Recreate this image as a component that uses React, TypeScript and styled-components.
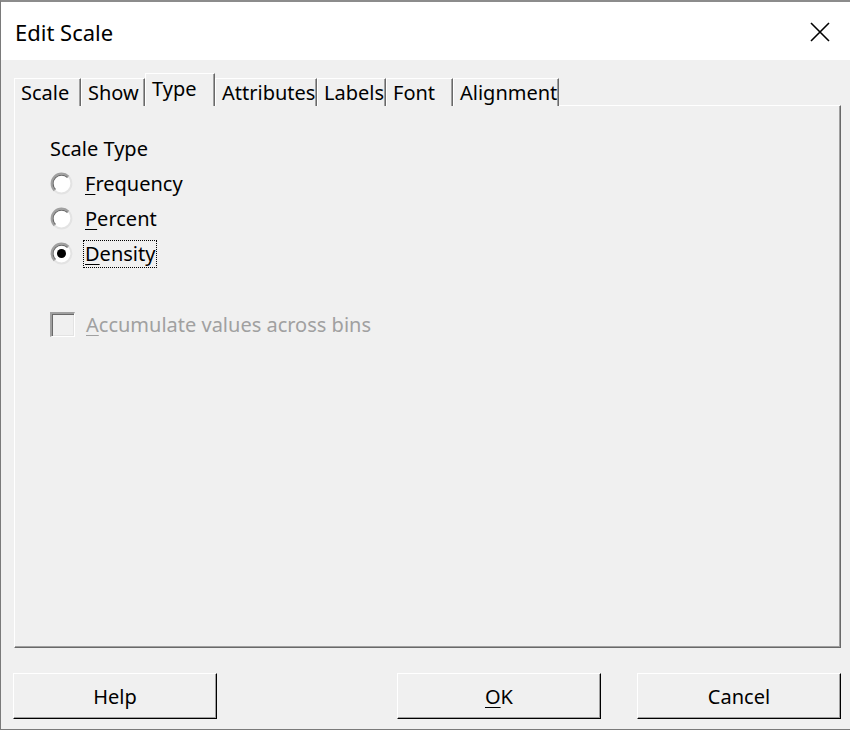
import React from "react";
import styled, { createGlobalStyle, css } from "styled-components";

const Global = createGlobalStyle`
  html, body { margin: 0; padding: 0; background: #f0f0f0; }
  body { font-family: "Noto Sans", "Open Sans", sans-serif; }
  * { box-sizing: border-box; }
`;

const Window = styled.div`
  width: 850px;
  height: 730px;
  background: #f0f0f0;
  border-top: 2px solid #8c8c8c;
  border-left: 1px solid #7a7a7a;
  border-bottom: 1px solid #7a7a7a;
  display: flex;
  flex-direction: column;
  color: #000;
  font-size: 20px;
  overflow: hidden;
`;

const TitleBar = styled.div`
  height: 58px;
  background: #fff;
  display: flex;
  align-items: center;
  justify-content: space-between;
  padding: 2px 18px 0 14px;
  font-size: 22px;
`;

const CloseButton = styled.div`
  width: 24px;
  height: 24px;
  display: flex;
  align-items: center;
  justify-content: center;
`;

const Body = styled.div`
  flex: 1;
  display: flex;
  flex-direction: column;
  padding: 13px 9px 0 12px;
`;

const TabStrip = styled.div`
  display: flex;
  align-items: flex-end;
  height: 33px;
  margin-left: 1px;
  position: relative;
  z-index: 1;
  margin-bottom: -1px;
`;

const Tab = styled.div<{ $w: number; $active?: boolean }>`
  width: ${(p) => p.$w}px;
  height: 28px;
  padding-left: 6px;
  display: flex;
  align-items: center;
  white-space: nowrap;
  background: #f0f0f0;
  border-top: 1px solid #fff;
  border-left: 1px solid #fff;
  border-right: 1px solid #696969;
  box-shadow: inset -1px 0 0 #a0a0a0;
  line-height: 1;
  ${(p) =>
    p.$active &&
    css`
      height: 33px;
      padding-bottom: 3px;
      border-bottom: none;
    `}
`;

const Panel = styled.div`
  height: 543px;
  margin-left: 1px;
  border-top: 1px solid #fff;
  border-left: 1px solid #fff;
  border-right: 1px solid #696969;
  border-bottom: 1px solid #696969;
  box-shadow: inset -1px -1px 0 #a0a0a0;
  padding: 28px 0 0 35px;
  display: flex;
  flex-direction: column;
`;

const GroupLabel = styled.div`
  height: 32px;
  line-height: 30px;
`;

const OptionRow = styled.div<{ $gap?: number }>`
  height: 35px;
  display: flex;
  align-items: center;
  gap: ${(p) => p.$gap ?? 10}px;
`;

const OptionText = styled.span<{ $focused?: boolean; $disabled?: boolean }>`
  line-height: 26px;
  padding: 0 1px;
  border: 1px dotted ${(p) => (p.$focused ? "#000" : "transparent")};
  color: ${(p) => (p.$disabled ? "#a0a0a0" : "#000")};
`;

const Mnemonic = styled.span`
  text-decoration: underline;
  text-underline-offset: 3px;
  text-decoration-thickness: 1px;
`;

const CheckRow = styled(OptionRow)`
  margin-top: 36px;
`;

const CheckBox = styled.div`
  width: 25px;
  height: 25px;
  border-top: 2px solid #a0a0a0;
  border-left: 2px solid #a0a0a0;
  border-right: 1px solid #fff;
  border-bottom: 1px solid #fff;
  box-shadow: inset 1px 1px 0 #696969, inset -1px -1px 0 #e3e3e3;
  background: #f0f0f0;
`;

const Footer = styled.div`
  display: flex;
  align-items: center;
  padding-top: 25px;
`;

const Button = styled.div<{ $gapLeft?: number }>`
  width: 204px;
  height: 46px;
  margin-left: ${(p) => p.$gapLeft ?? 0}px;
  display: flex;
  align-items: center;
  justify-content: center;
  background: #f0f0f0;
  border-top: 1px solid #fff;
  border-left: 1px solid #fff;
  border-right: 1px solid #000;
  border-bottom: 1px solid #000;
  box-shadow: inset -1px -1px 0 #a0a0a0;
`;

const Spacer = styled.div`
  flex: 1;
`;

const Radio: React.FC<{ checked?: boolean }> = ({ checked }) => (
  <svg width="23" height="23" viewBox="0 0 23 23">
    <circle cx="11.5" cy="11.5" r="10" fill="#fff" />
    <path d="M18.57 4.43 A10 10 0 0 1 4.43 18.57" fill="none" stroke="#e3e3e3" strokeWidth="2" />
    <path d="M4.43 18.57 A10 10 0 0 1 18.57 4.43" fill="none" stroke="#a0a0a0" strokeWidth="2" />
    <path d="M5.49 17.51 A8.5 8.5 0 0 1 17.51 5.49" fill="none" stroke="#696969" strokeWidth="1.2" />
    {checked && <circle cx="11.5" cy="11.5" r="4.5" fill="#000" />}
  </svg>
);

const tabs: { label: string; w: number }[] = [
  { label: "Scale", w: 67 },
  { label: "Show", w: 64 },
  { label: "Type", w: 70 },
  { label: "Attributes", w: 102 },
  { label: "Labels", w: 69 },
  { label: "Font", w: 67 },
  { label: "Alignment", w: 106 },
];

export default function App() {
  return (
    <>
      <Global />
      <Window>
        <TitleBar>
          <span>Edit Scale</span>
          <CloseButton>
            <svg width="22" height="22" viewBox="0 0 22 22">
              <path d="M2 2 L20 20 M20 2 L2 20" stroke="#000" strokeWidth="1.6" />
            </svg>
          </CloseButton>
        </TitleBar>
        <Body>
          <TabStrip>
            {tabs.map((t) => (
              <Tab key={t.label} $w={t.w} $active={t.label === "Type"}>
                {t.label}
              </Tab>
            ))}
          </TabStrip>
          <Panel>
            <GroupLabel>Scale Type</GroupLabel>
            <OptionRow>
              <Radio />
              <OptionText>
                <Mnemonic>F</Mnemonic>requency
              </OptionText>
            </OptionRow>
            <OptionRow>
              <Radio />
              <OptionText>
                <Mnemonic>P</Mnemonic>ercent
              </OptionText>
            </OptionRow>
            <OptionRow>
              <Radio checked />
              <OptionText $focused>
                <Mnemonic>D</Mnemonic>ensity
              </OptionText>
            </OptionRow>
            <CheckRow $gap={9}>
              <CheckBox />
              <OptionText $disabled>
                <Mnemonic>A</Mnemonic>ccumulate values across bins
              </OptionText>
            </CheckRow>
          </Panel>
          <Footer>
            <Button>Help</Button>
            <Spacer />
            <Button>
              <span>
                <Mnemonic>O</Mnemonic>K
              </span>
            </Button>
            <Button $gapLeft={36}>Cancel</Button>
          </Footer>
        </Body>
      </Window>
    </>
  );
}
